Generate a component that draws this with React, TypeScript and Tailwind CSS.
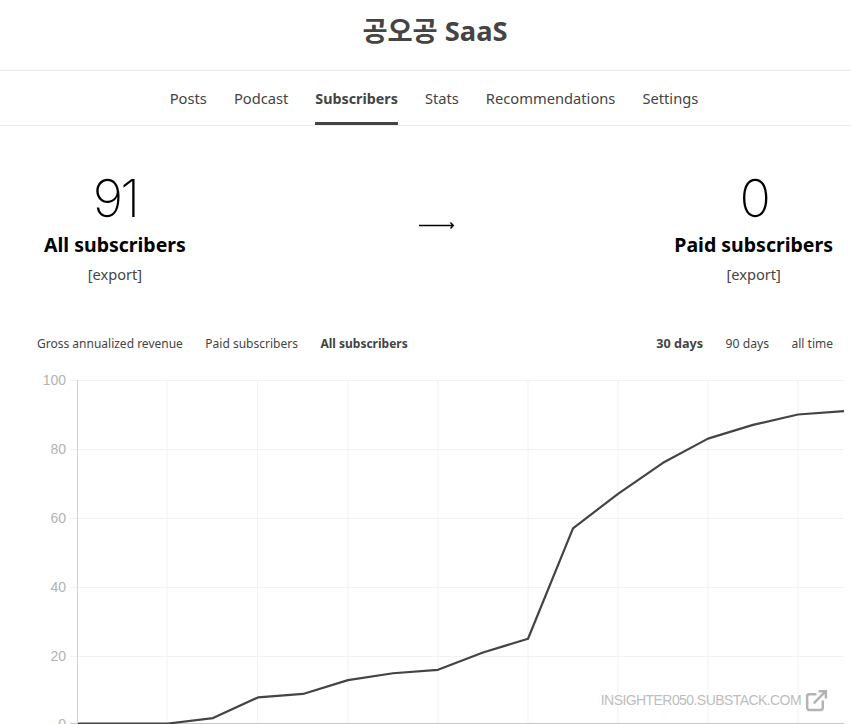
import { ExternalLink } from "lucide-react";

const FONT = "font-['Noto_Sans','Noto_Sans_CJK_KR',sans-serif]";
const NAV = ["Posts", "Podcast", "Subscribers", "Stats", "Recommendations", "Settings"];
const POINTS = [0, 0, 0, 2, 8, 9, 13, 15, 16, 21, 25, 57, 67, 76, 83, 87, 90, 91];
const GRID_X = [167, 257.5, 348, 438, 528, 618, 708, 798];
const TICKS = [20, 40, 60, 80, 100];

const yOf = (v: number) => 725 - v * 3.45;

function Stat({ value, label }: { value: number; label: string }) {
  return (
    <div className="flex flex-col items-center">
      <div className="mt-[-1px] mb-[1px] text-[52px] leading-[62px] font-extralight tracking-[-3px] text-black font-['Inter',sans-serif]">{value}</div>
      <div className="text-[19.5px] leading-[28px] font-bold text-black">{label}</div>
      <div className="mt-[5px] text-[14.6px] leading-[20px] text-[#444]">[export]</div>
    </div>
  );
}

function Chart() {
  const line = POINTS.map((v, i) => `${i === 0 ? "M" : "L"}${i === 17 ? 844 : 78 + 45 * i} ${Math.min(yOf(v), 723.5)}`).join(" ");
  return (
    <svg className="block" width="851" height="364" viewBox="0 360 851 364">
      {TICKS.map((t) => (
        <g key={t}>
          <line x1="70" x2="844" y1={yOf(t) + 0.5} y2={yOf(t) + 0.5} stroke="#f2f2f2" />
          <text x="66" y={yOf(t) + 5} textAnchor="end" fontSize="14" fill="#b3b3b3" fontFamily="Liberation Sans, sans-serif">
            {t}
          </text>
        </g>
      ))}
      {GRID_X.map((x) => (
        <line key={x} x1={x} x2={x} y1="380" y2="724" stroke="#f2f2f2" />
      ))}
      <line x1="77.5" x2="77.5" y1="380" y2="724" stroke="#d4d4d4" />
      <line x1="70" x2="844" y1="723.5" y2="723.5" stroke="#c8c8c8" />
      <text x="66" y="729" textAnchor="end" fontSize="14" fill="#b3b3b3" fontFamily="Liberation Sans, sans-serif">0</text>
      <path d={line} fill="none" stroke="#444" strokeWidth="2.2" strokeLinejoin="round" />
    </svg>
  );
}

export default function App() {
  return (
    <div className={`h-[724px] w-[851px] overflow-hidden bg-white text-[#444] ${FONT}`}>
      <header className="flex h-[71px] items-center justify-center border-b border-[#ebebeb] pb-[9px] pl-[19px]">
        <h1 className="text-[27.3px] leading-[36px] font-bold text-[#444]">공오공 SaaS</h1>
      </header>
      <nav className="flex h-[55px] items-stretch justify-center gap-[27px] border-b border-[#ebebeb] pl-[17px] text-[14.7px]">
        {NAV.map((item) => (
          <a
            key={item}
            className={
              item === "Subscribers"
                ? "flex items-center border-b-[3px] border-[#444] pt-[5px] text-[14.3px] font-bold"
                : "mb-[3px] flex items-center pt-[3px]"
            }
          >
            {item}
          </a>
        ))}
      </nav>
      <section className="flex h-[191px] items-start justify-between pt-[43px] pr-[18px] pl-[44px]">
        <Stat value={91} label="All subscribers" />
        <div className="mt-[50px] ml-[12px]">
          <svg className="block" width="35" height="12" viewBox="0 0 35 12">
            <path d="M0 6.5H34M31.5 3.5l2.8 3-2.8 3" fill="none" stroke="#000" strokeWidth="1.4" />
          </svg>
        </div>
        <Stat value={0} label="Paid subscribers" />
      </section>
      <div className="flex h-[54px] items-start justify-between pt-[17px] pr-[18px] pl-[37px] text-[12px] leading-[20px] text-[#444]">
        <div className="flex gap-[22.5px]">
          <span>Gross annualized revenue</span>
          <span>Paid subscribers</span>
          <span className="font-bold">All subscribers</span>
        </div>
        <div className="flex items-baseline gap-[22.5px]">
          <span className="text-[12.6px] font-bold">30 days</span>
          <span className="text-[12.2px]">90 days</span>
          <span>all time</span>
        </div>
      </div>
      <div className="relative mt-[-11px] h-[364px]">
        <Chart />
        <div className="absolute top-[328px] right-[22px] flex items-center gap-[3px] font-['Liberation_Sans',sans-serif] text-[14px] tracking-[-0.57px] text-[#bdbdbd]">
          <span>INSIGHTER050.SUBSTACK.COM</span>
          <ExternalLink size={25} strokeWidth={2.4} className="text-[#b3b3b3]" />
        </div>
      </div>
    </div>
  );
}
